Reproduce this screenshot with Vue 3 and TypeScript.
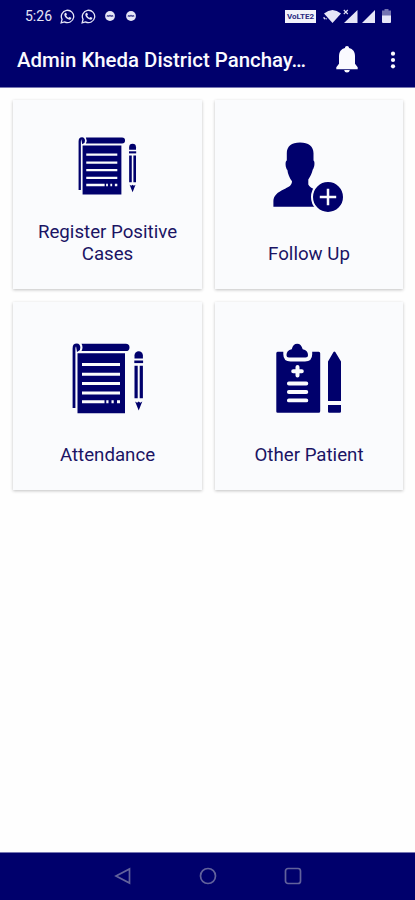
<script setup lang="ts">
interface Tile {
  id: number
  label: string
  icon: 'notes' | 'person' | 'clipboard'
  size: 'small' | 'large'
}

const title: string = 'Admin Kheda District Panchay…'

const tiles: Tile[] = [
  { id: 1, label: 'Register Positive Cases', icon: 'notes', size: 'small' },
  { id: 2, label: 'Follow Up', icon: 'person', size: 'large' },
  { id: 3, label: 'Attendance', icon: 'notes', size: 'large' },
  { id: 4, label: 'Other Patient', icon: 'clipboard', size: 'large' },
]
</script>

<template>
  <div class="screen">
    <header class="header">
      <div class="status">
        <span class="time">5:26</span>
        <svg v-for="n in 2" :key="n" class="chat" viewBox="0 0 16 16">
          <path d="M1.2 14.800l1-3.700A6.600 6.600 0 1 1 4.900 13.800z" fill="none" stroke="currentColor" stroke-width="1.400" />
          <path d="M5.300 4.200l1.200-.3.900 2-.8.900c.6 1.200 1.400 1.900 2.600 2.500l.9-.9 2 1-.3 1.200c-.6.9-1.900.9-3.100.4C6.500 10 5 8.300 4.600 6.400c-.1-.9.100-1.700.7-2.200z" fill="currentColor" />
        </svg>
        <svg v-for="n in 2" :key="'d' + n" class="badge" viewBox="0 0 10 10">
          <circle cx="5" cy="5" r="4.900" fill="currentColor" />
          <path d="M2.200 5.800V4.600h1.200v1.200M4.200 5.800V4.400h1.600v1.400M6.600 5.800V4.600h1.200v1.200" fill="none" stroke="#00006c" stroke-width=".7" />
        </svg>
        <span class="spacer"></span>
        <span class="volte"><span>VoLTE2</span></span>
        <svg class="wifi" viewBox="0 0 19 15">
          <path d="M1 4.500Q9.500-2.500 18 4.500L9.500 14z" fill="currentColor" />
          <path d="M.8 8l1.700 2H1zM3.500 9v1.500" fill="currentColor" stroke="currentColor" stroke-width=".6" />
        </svg>
        <svg class="signal first" viewBox="0 0 15 15">
          <path d="M14.500 1v13H1z" fill="currentColor" />
          <path d="M.8 1l4 4m0-4l-4 4" fill="none" stroke="currentColor" stroke-width="1.100" />
        </svg>
        <svg class="signal second" viewBox="0 0 15 15">
          <path d="M14 1v13H1z" fill="currentColor" />
        </svg>
        <svg class="battery" viewBox="0 0 9 14">
          <path d="M2.500 0h4v1.500H9V7H0V1.500h2.500z" fill="#7373b0" />
          <path d="M0 6.500h9v6.500q0 1-1 1H1q-1 0-1-1z" fill="currentColor" />
        </svg>
      </div>
      <div class="toolbar">
        <h1>{{ title }}</h1>
        <svg class="bell" viewBox="0 0 22 27">
          <path d="M11 0c1.300 0 2 .8 2 2.100 4 .9 6 4 6 8.200v7.500l2.700 3.500v1.900H.3v-1.900L3 17.800v-7.500c0-4.200 2-7.300 6-8.200C9 .8 9.700 0 11 0zM8.200 24.100h5.600c-.3 1.700-1.300 2.500-2.800 2.500s-2.500-.8-2.800-2.500z" fill="currentColor" />
        </svg>
        <svg class="more" viewBox="0 0 6 18">
          <circle cx="3" cy="2.700" r="2.100" fill="currentColor" />
          <circle cx="3" cy="9" r="2.100" fill="currentColor" />
          <circle cx="3" cy="15.300" r="2.100" fill="currentColor" />
        </svg>
      </div>
    </header>

    <main class="grid">
      <section v-for="tile in tiles" :key="tile.id" class="card">
        <svg v-if="tile.icon === 'notes'" class="icon notes" :class="tile.size" viewBox="0 0 72 71">
          <path d="M2 65V5.500C2 2.500 3 1.800 4.800 1.800S7 3 7 5.500" fill="none" stroke="currentColor" stroke-width="2.800" />
          <path d="M4 3h4v4l-3 2z" fill="currentColor" />
          <path d="M9.500.7h44.300a3.600 3.600 0 0 1 0 7.400H9.500q2-3.700 0-7.400z" fill="currentColor" />
          <path d="M5.500 10.300H53v60H5.500z" fill="currentColor" />
          <path d="M10 21.500h38M10 31.300h38M10 40.500h38M10 50h38M10 58.800h22.500M34.300 58.800h2.200M39.500 58.800h2.200M45 58.800h3" fill="none" stroke="#fafbfd" stroke-width="2.900" />
          <path d="M62.500 15.600v-3.200a4.200 4.200 0 0 1 8.400 0v3.200z" fill="currentColor" />
          <path d="M62.300 17.500h8.800v2.600h-8.800z" fill="currentColor" />
          <path d="M62.500 22.700h3.200v32.600h-3.200zM67.700 22.700h3.200v32.600h-3.200z" fill="currentColor" />
          <path d="M63.100 58.500l2 1.300 1.600-1.300 1.600 1.300 2-1.300-3.600 9z" fill="currentColor" />
        </svg>

        <svg v-else-if="tile.icon === 'person'" class="icon person" viewBox="0 0 71 71">
          <path d="M27 .4c8.500 0 13.500 3.900 13.500 10.800v7.200c1.600.7 1.200 6.700-.8 9.300-.9 4-2.400 7-4.400 9.700v5.200c1 2.400 3.400 3.500 8 5.500V64.800H.4V59c0-5.500 4.600-9 10.100-11.600 4.700-2.200 8.500-3.900 8.500-8.200-2.500-3-4.200-7.500-4.600-11.200-2-2-2.600-8.800-.6-9.600v-7.200C13.800 4.300 18.500.4 27 .4z" fill="currentColor" />
          <circle cx="55" cy="55" r="16" fill="currentColor" stroke="#fafbfd" stroke-width="2" />
          <path d="M55 46.800v16.400M46.800 55h16.400" fill="none" stroke="#fafbfd" stroke-width="2.500" />
        </svg>

        <svg v-else class="icon clipboard" viewBox="0 0 68 71">
          <path d="M1.600 8.800H7.300v2.500q0 7.200 7.200 7.200h14.500q7.200 0 7.200-7.200V8.800h6.500q1.500 0 1.500 1.500v58q0 1.500-1.500 1.500H1.600Q.3 69.800.3 68.500V10.300q0-1.500 1.300-1.500z" fill="currentColor" />
          <path d="M10.500 12q0-4.600 5.200-5.800C16.800 2.400 18.500.7 21.200.7s4.300 1.700 5.500 5.500q5.300 1.200 5.300 5.800 0 2.500-2.500 2.500H13q-2.500 0-2.500-2.500z" fill="currentColor" />
          <path d="M21.500 23.900v8.600M17.200 28.200h8.600" fill="none" stroke="#fafbfd" stroke-width="4" stroke-linecap="round" />
          <path d="M12.900 40.500h17.400M12.900 49h17.400M12.900 57.400h17.400" fill="none" stroke="#fafbfd" stroke-width="3.900" stroke-linecap="round" />
          <path d="M52 18.500L57.500 9q.9-1 1.800 0L65 18.500V58H52zM52 62h13v6.500q0 1.300-1.300 1.300H53.300q-1.300 0-1.300-1.300z" fill="currentColor" />
        </svg>
        <p>{{ tile.label }}</p>
      </section>
    </main>

    <nav class="nav">
      <svg viewBox="0 0 18 18"><path d="M15.500 2v14L2 9z" /></svg>
      <svg viewBox="0 0 18 18"><circle cx="9" cy="9" r="7.500" /></svg>
      <svg viewBox="0 0 18 18"><rect x="1.500" y="1.500" width="15" height="15" rx="2.500" /></svg>
    </nav>
  </div>
</template>

<style>
body {
  margin: 0;
  background: #fff;
}
</style>

<style scoped>
.screen {
  display: flex;
  flex-direction: column;
  width: 100%;
  height: 900px;
  overflow: hidden;
  background: #fefefe;
  font-family: Roboto, "Liberation Sans", sans-serif;
}
svg {
  display: block;
  flex: none;
}
.header {
  box-sizing: border-box;
  height: 88px;
  flex: none;
  background: #00006c;
  border-bottom: 1px solid #7777b2;
  color: #fafaff;
}
.status {
  display: flex;
  align-items: center;
  height: 32px;
  padding: 0 24px 0 25px;
  color: #e6e6f7;
}
.time {
  width: 35px;
  font-size: 14px;
  line-height: 32px;
}
.chat {
  width: 15px;
  height: 15px;
  margin-right: 6px;
}
.badge {
  width: 10px;
  height: 10px;
  margin: 0 8px 0 3px;
}
.spacer {
  flex: 1;
}
.volte {
  display: flex;
  align-items: center;
  justify-content: center;
  width: 31px;
  height: 13px;
  margin-right: 7px;
  background: #f2f2fa;
  color: #2b2b80;
  font-size: 8px;
  font-weight: 700;
}
.wifi {
  width: 19px;
  height: 15px;
}
.signal {
  width: 15px;
  height: 15px;
}
.first {
  margin-left: 1px;
}
.second {
  margin: 0 6px 0 3px;
}
.battery {
  width: 9px;
  height: 14px;
}
.toolbar {
  display: flex;
  align-items: center;
  height: 55px;
  padding: 0 19px 0 17px;
}
h1 {
  flex: 1;
  margin: 0;
  padding-top: 2px;
  font-size: 20.400px;
  font-weight: 500;
  line-height: 55px;
  white-space: nowrap;
}
.bell {
  width: 22px;
  height: 27px;
  margin: 0 32px 0 0;
}
.more {
  width: 6px;
  height: 18px;
}
.grid {
  display: grid;
  flex: 1;
  grid-template-columns: 189px 188px;
  grid-template-rows: 189px 188px;
  align-content: start;
  gap: 13px;
  padding: 12px 0 0 13px;
}
.card {
  display: flex;
  flex-direction: column;
  align-items: center;
  justify-content: space-between;
  box-sizing: border-box;
  padding: 42px 12px 24px;
  background: #fafbfd;
  color: #00006c;
  box-shadow: 0 1px 3px rgba(0, 0, 0, 0.24);
}
.card:nth-child(1) {
  padding-top: 37px;
}
.card:nth-child(n + 3) {
  padding-top: 41px;
}
.card p {
  width: 150px;
  margin: 0;
  font-size: 18.700px;
  line-height: 22px;
  text-align: center;
  color: #1b1464;
}
.notes.small {
  width: 59px;
  height: 58px;
}
.notes.large {
  width: 72px;
  height: 71px;
}
.person {
  width: 71px;
  height: 71px;
  margin-right: 2px;
  overflow: visible;
}
.clipboard {
  width: 68px;
  height: 71px;
  margin-left: 2px;
}
.nav {
  display: flex;
  align-items: center;
  justify-content: center;
  gap: 67px;
  box-sizing: border-box;
  height: 48px;
  flex: none;
  padding-bottom: 1px;
  background: #00006c;
  border-top: 1px solid #7777b2;
}
.nav svg {
  width: 18px;
  height: 18px;
  fill: none;
  stroke: #62629c;
  stroke-width: 1.700;
}
</style>
